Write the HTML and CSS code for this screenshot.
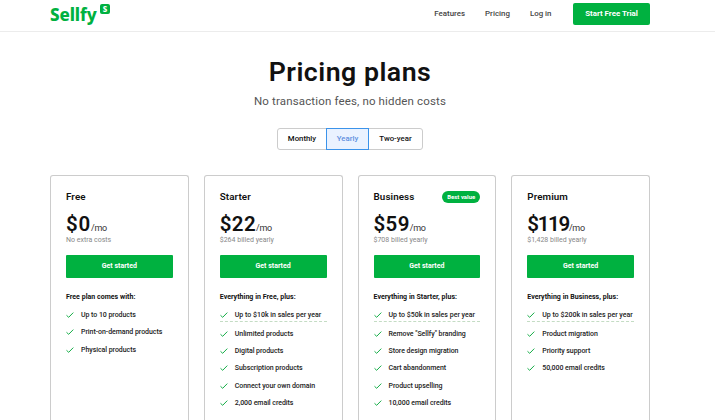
FILE: index.html
```html
<!DOCTYPE html>
<html lang="en">
<head>
<meta charset="utf-8">
<title>Sellfy pricing</title>
<link rel="stylesheet" href="styles.css">
</head>
<body>
<svg class="defs" width="0" height="0" aria-hidden="true"><symbol id="check" viewBox="0 0 8 6"><path d="M.5 3.3 2.7 5.3 7.3.6" fill="none" stroke="#16ad48" stroke-width="1"/></symbol></svg>
<header class="header">
  <a class="logo"><span class="wordmark">Sellfy</span><span class="mark">S</span></a>
  <nav class="nav"><a class="features">Features</a><a class="pricing">Pricing</a><a class="login">Log in</a><a class="trial"><span>Start Free Trial</span></a></nav>
</header>
<main>
  <h1>Pricing plans</h1>
  <p class="subtitle">No transaction fees, no hidden costs</p>
  <div class="toggle"><button class="monthly">Monthly</button><button class="yearly">Yearly</button><button class="two-year">Two-year</button></div>
  <section class="plans">
    <article class="card free">
      <div class="name"><h2>Free</h2></div>
      <div class="price"><b>$0</b><span>/mo</span></div>
      <p class="billing">No extra costs</p>
      <a class="cta">Get started</a>
      <h3>Free plan comes with:</h3>
      <ul>
        <li><svg><use href="#check"/></svg>Up to 10 products</li>
        <li><svg><use href="#check"/></svg>Print-on-demand products</li>
        <li><svg><use href="#check"/></svg>Physical products</li>
      </ul>
    </article>
    <article class="card">
      <div class="name"><h2>Starter</h2></div>
      <div class="price"><b>$22</b><span>/mo</span></div>
      <p class="billing">$264 billed yearly</p>
      <a class="cta">Get started</a>
      <h3>Everything in Free, plus:</h3>
      <ul>
        <li class="limit"><svg><use href="#check"/></svg>Up to $10k in sales per year</li>
        <li><svg><use href="#check"/></svg>Unlimited products</li>
        <li><svg><use href="#check"/></svg>Digital products</li>
        <li><svg><use href="#check"/></svg>Subscription products</li>
        <li><svg><use href="#check"/></svg>Connect your own domain</li>
        <li><svg><use href="#check"/></svg>2,000 email credits</li>
      </ul>
    </article>
    <article class="card">
      <div class="name"><h2>Business</h2><span class="badge">Best value</span></div>
      <div class="price"><b>$59</b><span>/mo</span></div>
      <p class="billing">$708 billed yearly</p>
      <a class="cta">Get started</a>
      <h3>Everything in Starter, plus:</h3>
      <ul>
        <li class="limit"><svg><use href="#check"/></svg>Up to $50k in sales per year</li>
        <li><svg><use href="#check"/></svg>Remove "Sellfy" branding</li>
        <li><svg><use href="#check"/></svg>Store design migration</li>
        <li><svg><use href="#check"/></svg>Cart abandonment</li>
        <li><svg><use href="#check"/></svg>Product upselling</li>
        <li><svg><use href="#check"/></svg>10,000 email credits</li>
      </ul>
    </article>
    <article class="card premium">
      <div class="name"><h2>Premium</h2></div>
      <div class="price"><b>$119</b><span>/mo</span></div>
      <p class="billing">$1,428 billed yearly</p>
      <a class="cta">Get started</a>
      <h3>Everything in Business, plus:</h3>
      <ul>
        <li class="limit"><svg><use href="#check"/></svg>Up to $200k in sales per year</li>
        <li><svg><use href="#check"/></svg>Product migration</li>
        <li><svg><use href="#check"/></svg>Priority support</li>
        <li><svg><use href="#check"/></svg>50,000 email credits</li>
      </ul>
    </article>
  </section>
</main>
</body>
</html>
```
FILE: styles.css
```css
* { box-sizing: border-box; margin: 0; padding: 0; }
body { background: #fff; color: #111; font-family: Roboto, "Liberation Sans", sans-serif; }
.defs { position: absolute; }
.header { height: 32px; padding: 0 65px 0 50px; border-bottom: 1px solid #ececec; display: flex; justify-content: space-between; }
.logo { display: flex; color: #00b140; }
.wordmark { width: 50px; font: 800 17px/29px "Noto Sans", sans-serif; letter-spacing: -.1px; }
.mark { width: 10px; height: 10px; margin-top: 4px; border-radius: 2px; background: #00b140; color: #fff; font: 800 8px/10px "Noto Sans", sans-serif; text-align: center; }
.nav { display: flex; line-height: 27px; font-size: 7.9px; font-weight: 500; color: #444; }
.nav a { margin-right: 20px; }
.nav .login { margin-right: 21.5px; }
.nav .trial { margin: 3px 0 0; width: 77px; height: 22px; border-radius: 2px; background: #00b140; color: #fff; font-weight: 700; line-height: 22px; text-align: center; }
main { display: flex; flex-direction: column; align-items: center; width: 700px; }
h1 { margin-top: 22px; height: 37px; line-height: 37px; font-size: 26.7px; font-weight: 600; letter-spacing: .5px; }
.subtitle { margin-top: 2px; height: 16px; line-height: 16px; font-size: 11.5px; letter-spacing: .15px; color: #555; }
.toggle { margin-top: 19px; width: 146px; height: 22px; border: 1px solid #ccc; border-radius: 3px; display: flex; }
.toggle button { border: 0; background: none; color: #111; font: 500 7.8px/20px Roboto, sans-serif; height: 20px; }
.toggle .monthly { width: 48px; }
.toggle .yearly { width: 43px; height: 22px; margin-top: -1px; border: 1px solid #3b93ea; background: #eaf2ff; color: #5d8fe0; }
.toggle .two-year { flex: 1; }
.plans { margin-top: 25px; width: 600px; display: grid; grid-template-columns: repeat(4, 1fr); gap: 15px; }
.card { height: 245px; border: 1px solid #ccc; border-bottom: 0; border-radius: 3px 3px 0 0; padding: 13px 15px 0; }
.name { height: 16px; display: flex; align-items: center; justify-content: space-between; }
h2 { font-size: 9.8px; line-height: 16px; font-weight: 600; letter-spacing: .1px; }
.badge { width: 38px; height: 12px; border-radius: 6px; background: #00b140; color: #fff; font-size: 6px; font-weight: 700; line-height: 12px; text-align: center; }
.price { margin-top: 7px; height: 24px; line-height: 24px; white-space: nowrap; }
.price b { font-size: 20.5px; font-weight: 600; letter-spacing: .4px; }
.free .price b { letter-spacing: .8px; }
.premium .price b { letter-spacing: -1.3px; }
.price span { font-size: 9px; letter-spacing: -.3px; color: #333; }
.billing { height: 10px; margin-top: -1px; line-height: 10px; font-size: 7px; color: #888; }
.cta { display: block; margin-top: 10px; height: 23px; border-radius: 1px; background: #00b140; color: #fff; font-size: 7px; font-weight: 700; line-height: 22px; text-align: center; }
h3 { margin-top: 13px; height: 12px; line-height: 12px; font-size: 7px; font-weight: 700; letter-spacing: .03px; white-space: nowrap; }
ul { list-style: none; margin-top: 6px; }
li { height: 17.4px; line-height: 12px; display: flex; font-size: 7px; font-weight: 500; letter-spacing: -.05px; color: #222; white-space: nowrap; }
.limit { height: 13px; margin-bottom: 5.5px; letter-spacing: 0; border-bottom: 1px dashed #c4dcc4; }
li svg { width: 8px; height: 6px; margin: 3px 7px 0 0; flex: none; }
```
